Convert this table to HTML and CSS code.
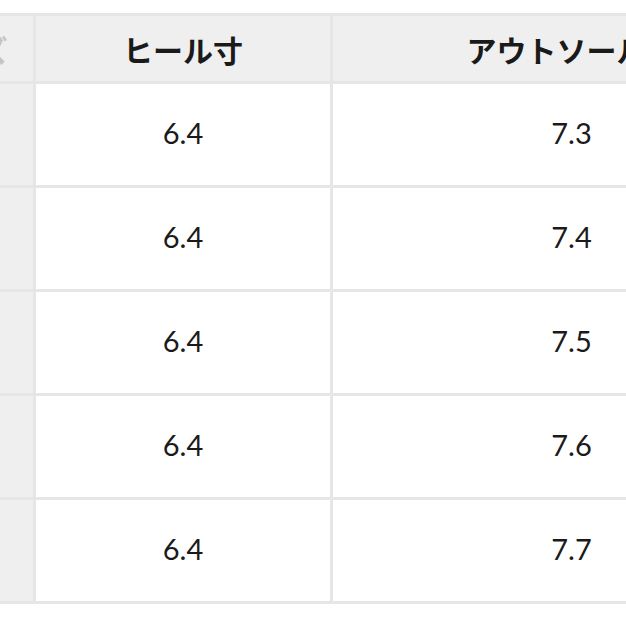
FILE: index.html
```html
<!DOCTYPE html>
<html lang="ja">
<head>
<meta charset="utf-8">
<link rel="stylesheet" href="styles.css">
</head>
<body>
<div class="frame">
  <table class="size-table">
    <thead>
      <tr>
        <th class="c1">サイズ</th>
        <th class="c2">ヒール寸</th>
        <th class="c3">アウトソール幅</th>
      </tr>
    </thead>
    <tbody>
      <tr><td class="c1">22.5</td><td class="c2">6.4</td><td class="c3">7.3</td></tr>
      <tr><td class="c1">23.0</td><td class="c2">6.4</td><td class="c3">7.4</td></tr>
      <tr><td class="c1">23.5</td><td class="c2">6.4</td><td class="c3">7.5</td></tr>
      <tr><td class="c1">24.0</td><td class="c2">6.4</td><td class="c3">7.6</td></tr>
      <tr><td class="c1">24.5</td><td class="c2">6.4</td><td class="c3">7.7</td></tr>
    </tbody>
  </table>
</div>
</body>
</html>
```
FILE: styles.css
```css
html, body {
  margin: 0;
  padding: 0;
  background: #ffffff;
}
.frame {
  width: 626px;
  height: 626px;
  overflow: hidden;
  padding-top: 13px;
  box-sizing: border-box;
}
.size-table {
  border-collapse: separate;
  border-spacing: 3px;
  background: #e6e6e6;
  margin-left: -110px;
  table-layout: fixed;
  width: 922px;
}
.size-table th,
.size-table td {
  padding: 0;
  text-align: center;
  vertical-align: middle;
  white-space: nowrap;
  overflow: hidden;
}
.size-table th {
  height: 65px;
  background: #efefef;
  font-family: "Noto Sans CJK JP", "Noto Sans", sans-serif;
  font-weight: 700;
  font-size: 30px;
  color: #1a1a1a;
}
.size-table td {
  height: 101px;
  padding-bottom: 4px;
  box-sizing: border-box;
  background: #ffffff;
  font-family: Lato, "Noto Sans", sans-serif;
  font-size: 29px;
  color: #1a1a1a;
}
.size-table .c1 {
  width: 140px;
}
.size-table th.c1 {
  color: #c4c4c4;
}
.size-table td.c1 {
  background: #efefef;
  color: #dedede;
}
.size-table .c2 {
  width: 294px;
}
.size-table .c3 {
  width: 477px;
}
```
